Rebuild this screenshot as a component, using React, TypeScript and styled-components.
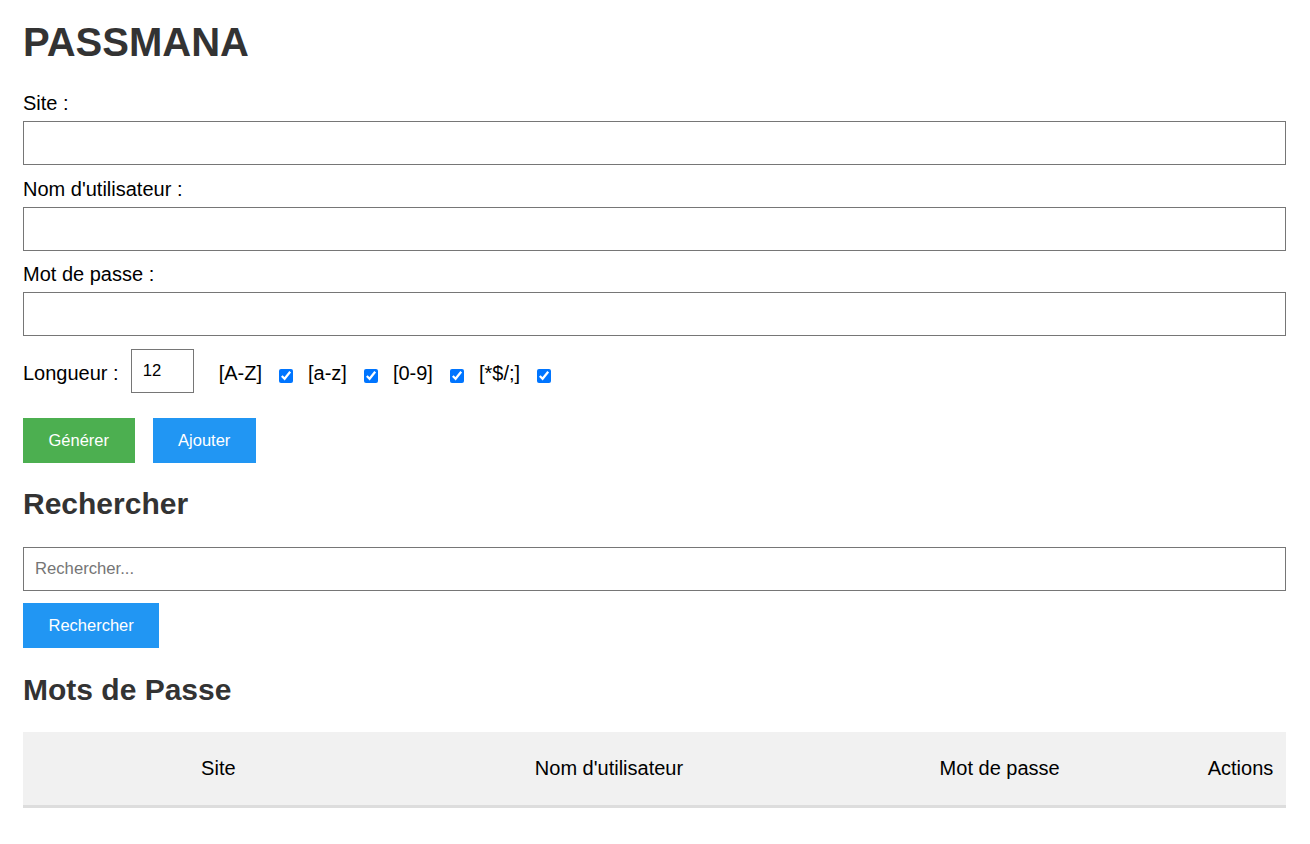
import styled, { createGlobalStyle } from "styled-components";

const GlobalStyle = createGlobalStyle`
  body {
    margin: 0;
    background: #fff;
    font-family: "Liberation Sans", Arial, sans-serif;
    color: #000;
  }
`;

const Page = styled.div`
  padding: 19px 24px 40px 23px;
`;

const Title = styled.h1`
  margin: 0 0 27px;
  font-size: 40px;
  line-height: 46px;
  font-weight: bold;
  color: #333;
`;

const SectionTitle = styled.h2<{ $top: number }>`
  margin: ${(p) => p.$top}px 0 ${(p) => 49 - p.$top}px;
  font-size: 30px;
  line-height: 35px;
  font-weight: bold;
  color: #333;
`;

const Label = styled.label`
  display: block;
  font-size: 20px;
  line-height: 23px;
  margin-bottom: 6px;
`;

const TextInput = styled.input`
  display: block;
  box-sizing: border-box;
  width: 100%;
  height: 44px;
  margin: 0 0 12.5px;
  padding: 0 11px;
  border: 1px solid #767676;
  border-radius: 0;
  font-family: "Liberation Sans", Arial, sans-serif;
  font-size: 16.67px;
  color: #000;
  outline: none;

  &::placeholder {
    color: #757575;
  }
`;

const SearchInput = styled(TextInput)`
  margin-bottom: 0;
`;

const OptionsRow = styled.div`
  display: flex;
  align-items: center;
  height: 44px;
  margin: 0.5px 0 25px;
  font-size: 20px;
  line-height: 23px;
`;

const RowText = styled.span`
  margin-top: 5px;
`;

const NumberInput = styled.input`
  box-sizing: border-box;
  width: 63px;
  height: 44px;
  margin: 0 25px 0 12px;
  padding: 0 11px;
  border: 1px solid #767676;
  border-radius: 0;
  font-family: "Liberation Sans", Arial, sans-serif;
  font-size: 16.67px;
  outline: none;
  -moz-appearance: textfield;

  &::-webkit-inner-spin-button,
  &::-webkit-outer-spin-button {
    -webkit-appearance: none;
    margin: 0;
  }
`;

const Option = styled.span`
  display: contents;
`;

const Check = styled.input`
  width: 14px;
  height: 14px;
  margin: 10px 15px 0 17px;
`;

const ButtonRow = styled.div`
  display: flex;
  gap: 18px;
`;

const Button = styled.button<{ $color: string }>`
  height: 45px;
  padding: 0 25.5px;
  border: none;
  border-radius: 0;
  background: ${(p) => p.$color};
  color: #fff;
  font-family: "Liberation Sans", Arial, sans-serif;
  font-size: 16.5px;
  cursor: pointer;
`;

const SearchButton = styled(Button)`
  display: block;
  margin-top: 12px;
`;

const Table = styled.table`
  width: 100%;
  border-collapse: collapse;
  table-layout: fixed;
`;

const ActionsCol = styled.col`
  width: 91px;
`;

const HeadRow = styled.tr`
  background: #f1f1f1;
  border-bottom: 3px solid #ddd;
`;

const Th = styled.th`
  padding: 25px 12.5px;
  font-size: 20px;
  line-height: 23px;
  font-weight: normal;
  text-align: center;
  white-space: nowrap;
`;

const options = ["[A-Z]", "[a-z]", "[0-9]", "[*$/;]"];

export default function App() {
  return (
    <>
      <GlobalStyle />
      <Page>
        <Title>PASSMANA</Title>

        <Label htmlFor="site">Site :</Label>
        <TextInput id="site" type="text" />
        <Label htmlFor="user">Nom d'utilisateur :</Label>
        <TextInput id="user" type="text" />
        <Label htmlFor="pass">Mot de passe :</Label>
        <TextInput id="pass" type="text" />

        <OptionsRow>
          <RowText>Longueur :</RowText>
          <NumberInput type="number" defaultValue={12} />
          {options.map((o) => (
            <Option key={o}>
              <RowText>{o}</RowText>
              <Check type="checkbox" defaultChecked />
            </Option>
          ))}
        </OptionsRow>

        <ButtonRow>
          <Button $color="#4caf50">Générer</Button>
          <Button $color="#2196f3">Ajouter</Button>
        </ButtonRow>

        <SectionTitle $top={23}>Rechercher</SectionTitle>
        <SearchInput type="text" placeholder="Rechercher..." />
        <SearchButton $color="#2196f3">Rechercher</SearchButton>

        <SectionTitle $top={24}>Mots de Passe</SectionTitle>
        <Table>
          <colgroup>
            <col />
            <col />
            <col />
            <ActionsCol />
          </colgroup>
          <thead>
            <HeadRow>
              <Th>Site</Th>
              <Th>Nom d'utilisateur</Th>
              <Th>Mot de passe</Th>
              <Th>Actions</Th>
            </HeadRow>
          </thead>
          <tbody></tbody>
        </Table>
      </Page>
    </>
  );
}
